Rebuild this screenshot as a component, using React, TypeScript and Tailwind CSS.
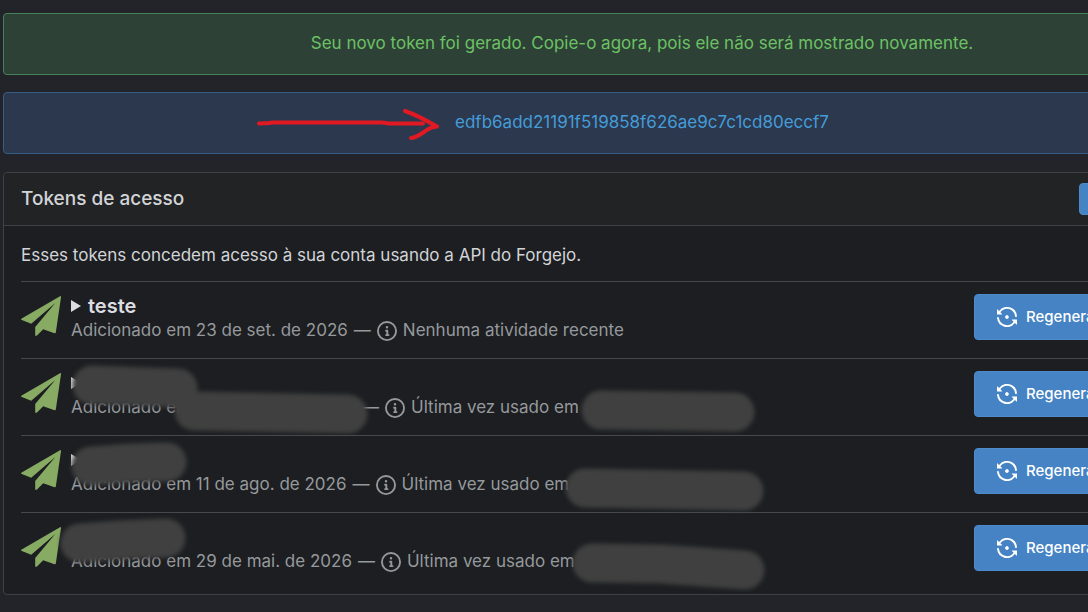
interface TokenRow {
  id: number;
  name?: string;
  added: string;
  // width of the hidden part of the date
  hiddenWidth?: string;
  activity: string;
  smudges: string[];
}

const TOKENS: TokenRow[] = [
  {
    id: 1,
    name: 'teste',
    added: 'Adicionado em 23 de set. de 2026',
    activity: 'Nenhuma atividade recente',
    smudges: [],
  },
  {
    id: 2,
    added: 'Adicionado em',
    hiddenWidth: 'w-[165px]',
    activity: 'Última vez usado em',
    smudges: ['M71 26 L157 29', 'M173 52 L327 55', 'M580 51 L714 53'],
  },
  {
    id: 3,
    added: 'Adicionado em 11 de ago. de 2026',
    activity: 'Última vez usado em',
    smudges: ['M70 30 L110 27 L146 26', 'M564 52 L723 55'],
  },
  {
    id: 4,
    added: 'Adicionado em 29 de mai. de 2026',
    activity: 'Última vez usado em',
    smudges: ['M59 30 L100 27 L145 25', 'M571 50 L640 51 L724 57'],
  },
];

function PlaneIcon() {
  return (
    <svg viewBox="0 0 40 40" className="h-10 w-10 shrink-0 text-[#87ab63]" fill="currentColor" aria-hidden="true">
      <path d="M39 .2Q40.200-.2 40 1.200L34.800 36.500Q34.500 37.500 33.500 37.200L22.200 33.200L16 39.500Q14.300 40.600 14.200 39V31L34.300 7L10.200 27.800L.8 24Q-.6 23.200.7 22.400Z" />
    </svg>
  );
}

function InfoIcon() {
  return (
    <svg viewBox="0 0 16 16" className="h-5 w-5 shrink-0" fill="currentColor" aria-hidden="true">
      <path d="M0 8a8 8 0 1 1 16 0A8 8 0 0 1 0 8Zm8-6.500a6.500 6.500 0 1 0 0 13 6.500 6.500 0 0 0 0-13ZM6.500 7.750A.75.75 0 0 1 7.250 7h1a.75.75 0 0 1 .75.75v2.750h.25a.75.75 0 0 1 0 1.500h-2a.75.75 0 0 1 0-1.500h.25v-2h-.25a.75.75 0 0 1-.75-.75ZM8 6a1 1 0 1 1 0-2 1 1 0 0 1 0 2Z" />
    </svg>
  );
}

function ReopenIcon() {
  return (
    <svg viewBox="0 0 16 16" className="h-5 w-5 shrink-0" fill="currentColor" aria-hidden="true">
      <path d="M5.029 2.217a6.500 6.500 0 0 1 9.437 5.110.75.75 0 1 0 1.492-.154 8 8 0 0 0-14.315-4.030L.427 1.927A.25.25 0 0 0 0 2.104V5.750A.25.25 0 0 0 .25 6h3.646a.25.25 0 0 0 .177-.427L2.715 4.215a6.491 6.491 0 0 1 2.314-1.998ZM1.262 8.169a.75.75 0 0 0-1.220.658 8.001 8.001 0 0 0 14.315 4.030l1.216 1.216a.25.25 0 0 0 .427-.177V10.250a.25.25 0 0 0-.25-.25h-3.646a.25.25 0 0 0-.177.427l1.358 1.358a6.501 6.501 0 0 1-11.751-3.110.75.75 0 0 0-.272-.506Z" />
      <path d="M9.060 9.060a1.500 1.500 0 1 1-2.120-2.120 1.500 1.500 0 0 1 2.120 2.120Z" />
    </svg>
  );
}

function Arrow() {
  return (
    <svg
      viewBox="0 0 184 34"
      className="pointer-events-none absolute top-3.5 left-[251px] h-[34px] w-[184px]"
      fill="none"
      stroke="#e01923"
      strokeWidth="4"
      strokeLinecap="round"
      strokeLinejoin="round"
      aria-hidden="true"
    >
      <path d="M4 16.500L14 16L18 15.500H127L134 16.500H168" />
      <path d="M150 4Q162 8 182 19.500Q175 20 169 25Q160 31 156 31" />
    </svg>
  );
}

function Smudges({ paths }: { paths: string[] }) {
  return (
    <svg
      viewBox="0 0 760 77"
      className="pointer-events-none absolute top-0 left-0 h-[77px] w-[760px] overflow-visible blur-[2px]"
      fill="none"
      stroke="#404040"
      strokeWidth="39"
      strokeLinecap="round"
      strokeLinejoin="round"
      aria-hidden="true"
    >
      {paths.map((d) => (
        <path key={d} d={d} />
      ))}
    </svg>
  );
}

function TokenItem({ token }: { token: TokenRow }) {
  return (
    <li className="relative flex h-[77px] items-start border-t border-[#46484c] pt-3">
      <div className="pt-0.5">
        <PlaneIcon />
      </div>
      <div className="ml-2.5 grow">
        <details>
          <summary className="flex h-6 cursor-pointer list-none items-center gap-[7px] text-xl font-semibold text-[#dcdde0]">
            <svg viewBox="0 0 10 12" className="h-3 w-2.5 text-[#dcdde0]" fill="currentColor" aria-hidden="true">
              <path d="M0 0L10 6L0 12Z" />
            </svg>
            {token.name}
          </summary>
        </details>
        <p className="flex h-[26px] items-center whitespace-nowrap text-[#96999c]">
          <span>{token.added}</span>
          {token.hiddenWidth && <span className={token.hiddenWidth} />}
          <span className="mx-1.5">—</span>
          <InfoIcon />
          <span className="ml-1.5">{token.activity}</span>
        </p>
      </div>
      <div className="w-[289px] shrink-0">
        <button
          type="button"
          className="flex h-[46px] items-center gap-[9px] rounded border border-[#4e8bca] bg-[#4583c4] px-[22px] text-[15px] font-medium text-white"
        >
          <ReopenIcon />
          Regenerar
        </button>
      </div>
      {token.smudges.length > 0 && <Smudges paths={token.smudges} />}
    </li>
  );
}

export default function App() {
  return (
    <div className="min-h-screen overflow-x-hidden bg-[#232429] font-['Inter',sans-serif] text-[17px] text-[#d2d4d7]">
      <main className="ml-[3px] w-[calc(100%+190px)] pt-[13px] pb-[17px]">
        <div className="flex h-[62px] items-center justify-center rounded border border-[#468259] bg-[#2d4136] text-[#6cc164]">
          Seu novo token foi gerado. Copie-o agora, pois ele não será mostrado novamente.
        </div>
        <div className="relative mt-[17px] flex h-[62px] items-center justify-center rounded border border-[#345d8a] bg-[#2b384d] text-[#459cd8]">
          <Arrow />
          edfb6add21191f519858f626ae9c7c1cd80eccf7
        </div>
        <section className="mt-[18px] rounded border border-[#3e4247] bg-[#1c1e21]">
          <header className="flex h-[53px] items-center justify-between rounded-t border-b border-[#3e4247] bg-[#212325] px-[17px]">
            <h1 className="text-[19px] font-medium">Tokens de acesso</h1>
            <button
              type="button"
              aria-label="Gerar novo token"
              className="h-8 w-[184px] rounded border border-[#4e8bca] bg-[#4583c4]"
            />
          </header>
          <div className="px-[17px]">
            <p className="flex h-[55px] items-center pt-1">
              Esses tokens concedem acesso à sua conta usando a API do Forgejo.
            </p>
            <ul className="pb-[5px]">
              {TOKENS.map((token) => (
                <TokenItem key={token.id} token={token} />
              ))}
            </ul>
          </div>
        </section>
      </main>
    </div>
  );
}
